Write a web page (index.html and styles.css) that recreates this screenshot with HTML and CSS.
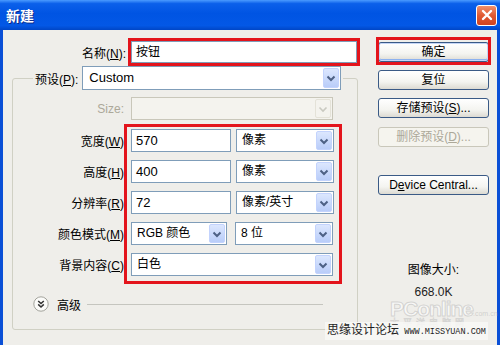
FILE: index.html
```html
<!DOCTYPE html>
<html lang="zh-CN">
<head>
    <meta charset="UTF-8" />
    <title>新建</title>
    <link rel="stylesheet" href="styles.css">
</head>
<body>
    <div class="window">
        <div class="titlebar">
            <span class="title">新建</span>
            <span class="close">
                <svg width="18" height="18" viewBox="0 0 18 18"><path d="M5 5 L13 13 M13 5 L5 13" stroke="#fff" stroke-width="2.4" stroke-linecap="round"/></svg>
            </span>
        </div>

        <div class="body">
            <div class="main">
                <div class="name-row">
                    <span class="label">名称(<u>N</u>):</span>
                    <div class="input name-input">按钮</div>
                </div>

                <fieldset class="group">
                    <legend class="preset">
                        <span class="preset-inner">
                            <span>预设(<u>P</u>):</span>
                            <span class="select preset-select">
                                <span class="val">Custom</span>
                                <span class="arrow"><svg width="14" height="18" viewBox="0 0 14 18"><path d="M3.5 7.5 L7 11 L10.5 7.5" fill="none" stroke="#4d6185" stroke-width="2"/></svg></span>
                            </span>
                        </span>
                    </legend>

                    <div class="row size-row">
                        <span class="label disabled">Size:</span>
                        <span class="select wide off">
                            <span class="val"></span>
                            <span class="arrow"><svg width="14" height="18" viewBox="0 0 14 18"><path d="M3.5 7.5 L7 11 L10.5 7.5" fill="none" stroke="#c9c9c0" stroke-width="1.6"/></svg></span>
                        </span>
                    </div>

                    <div class="fields">
                        <div class="row">
                            <span class="label">宽度(<u>W</u>)</span>
                            <div class="input num">570</div>
                            <span class="select unit">
                                <span class="val">像素</span>
                                <span class="arrow"><svg width="14" height="18" viewBox="0 0 14 18"><path d="M3.5 7.5 L7 11 L10.5 7.5" fill="none" stroke="#4d6185" stroke-width="2"/></svg></span>
                            </span>
                        </div>
                        <div class="row">
                            <span class="label">高度(<u>H</u>)</span>
                            <div class="input num">400</div>
                            <span class="select unit">
                                <span class="val">像素</span>
                                <span class="arrow"><svg width="14" height="18" viewBox="0 0 14 18"><path d="M3.5 7.5 L7 11 L10.5 7.5" fill="none" stroke="#4d6185" stroke-width="2"/></svg></span>
                            </span>
                        </div>
                        <div class="row">
                            <span class="label">分辨率(<u>R</u>)</span>
                            <div class="input num">72</div>
                            <span class="select unit">
                                <span class="val">像素/英寸</span>
                                <span class="arrow"><svg width="14" height="18" viewBox="0 0 14 18"><path d="M3.5 7.5 L7 11 L10.5 7.5" fill="none" stroke="#4d6185" stroke-width="2"/></svg></span>
                            </span>
                        </div>
                        <div class="row">
                            <span class="label">颜色模式(<u>M</u>)</span>
                            <span class="select mode">
                                <span class="val">RGB 颜色</span>
                                <span class="arrow"><svg width="14" height="18" viewBox="0 0 14 18"><path d="M3.5 7.5 L7 11 L10.5 7.5" fill="none" stroke="#4d6185" stroke-width="2"/></svg></span>
                            </span>
                            <span class="select unit bits">
                                <span class="val">8 位</span>
                                <span class="arrow"><svg width="14" height="18" viewBox="0 0 14 18"><path d="M3.5 7.5 L7 11 L10.5 7.5" fill="none" stroke="#4d6185" stroke-width="2"/></svg></span>
                            </span>
                        </div>
                        <div class="row">
                            <span class="label">背景内容(<u>C</u>)</span>
                            <span class="select wide">
                                <span class="val">白色</span>
                                <span class="arrow"><svg width="14" height="18" viewBox="0 0 14 18"><path d="M3.5 7.5 L7 11 L10.5 7.5" fill="none" stroke="#4d6185" stroke-width="2"/></svg></span>
                            </span>
                        </div>
                        <div class="mark"></div>
                    </div>

                    <div class="advanced">
                        <svg width="16" height="16" viewBox="0 0 16 16">
                            <circle cx="8" cy="8" r="7.2" fill="#fbfbf9" stroke="#a3a39c"/>
                            <path d="M5.2 5 L8 7.6 L10.8 5 M5.2 8.4 L8 11 L10.8 8.4" fill="none" stroke="#333" stroke-width="1.5"/>
                        </svg>
                        <span class="adv-text">高级</span>
                        <span class="line"></span>
                    </div>
                </fieldset>
            </div>

            <div class="side">
                <div class="btn default">确定</div>
                <div class="btn">复位</div>
                <div class="btn">存储预设(<u>S</u>)...</div>
                <div class="btn off">删除预设(<u>D</u>)...</div>
                <div class="btn gap">D<u>e</u>vice Central...</div>
                <div class="size-title">图像大小:</div>
                <div class="size-value">668.0K</div>
            </div>
        </div>

        <div class="pconline">
            <span class="pc-big">PConline</span><span class="pc-dom">.com.cn</span>
            <span class="pc-cn">太平洋电脑网</span>
        </div>
        <div class="watermark">思缘设计论坛 <span class="url">WWW.MISSYUAN.COM</span></div>
    </div>
</body>
</html>
```

FILE: styles.css
```css
* {
    box-sizing: border-box;
}

body {
    margin: 0;
    font-family: "Liberation Sans", "Noto Sans CJK SC", sans-serif;
    font-size: 12px;
    color: #000;
}

.window {
    position: relative;
    width: 500px;
    height: 345px;
    overflow: hidden;
}

.titlebar {
    height: 30px;
    display: flex;
    align-items: center;
    justify-content: space-between;
    padding: 0 3px 0 6px;
    background: linear-gradient(to bottom, #4a9bff 0%, #0b60ea 12%, #0054e3 45%, #0358e6 85%, #0046c6 100%);
}

.title {
    color: #fff;
    font-weight: bold;
    font-size: 14px;
    text-shadow: 1px 1px 0 #0a2a8a;
}

.close {
    width: 21px;
    height: 21px;
    display: flex;
    align-items: center;
    justify-content: center;
    border: 1px solid #fff;
    border-radius: 3px;
    background: linear-gradient(to bottom, #f0906c, #e05a33 50%, #cf4220);
}

.body {
    display: flex;
    height: 315px;
    padding-left: 9px;
    background: #efeeea;
    border-left: 3px solid #0a4fd6;
    border-right: 3px solid #0a4fd6;
}

.main {
    width: 346px;
}

.name-row {
    display: flex;
    align-items: center;
    margin-top: 11px;
    height: 22px;
}

.label {
    text-align: right;
    white-space: nowrap;
}

.name-row .label {
    width: 119px;
    padding-right: 5px;
}

.input {
    height: 22px;
    line-height: 20px;
    padding-left: 4px;
    background: #fff;
    border: 1px solid #7f9db9;
}

.name-input {
    width: 226px;
    outline: 3px solid #e3141c;
    outline-offset: 0;
}

.group {
    margin: 3px 0 0;
    padding: 0 0 17px;
    width: 346px;
    min-width: 0;
    border: 1px solid #d0d0c4;
    border-radius: 3px;
}

.preset {
    margin-left: 20px;
    padding: 0 2px;
}

.preset-inner {
    display: flex;
    align-items: center;
    gap: 4px;
}

.select {
    display: flex;
    height: 23px;
    background: #fff;
    border: 1px solid #7f9db9;
}

.select .val {
    flex: 1;
    padding-left: 5px;
    line-height: 21px;
    white-space: nowrap;
}

.arrow {
    width: 16px;
    margin: 1px;
    display: flex;
    align-items: center;
    justify-content: center;
    border: 1px solid #c3d3fd;
    border-radius: 2px;
    background: linear-gradient(to bottom, #dce7fe, #b9cdf9);
}

.preset-select {
    width: 259px;
    height: 24px;
}

.preset-select .val {
    padding-left: 6px;
    font-size: 13px;
}

.row {
    display: flex;
    align-items: center;
    height: 23px;
    margin-top: 8px;
}

.row .label {
    width: 118px;
    padding-right: 7px;
}

.size-row {
    margin-top: 7px;
}

.disabled {
    color: #aca899;
}

.select.off {
    background: #f4f3ee;
    border-color: #c9c7ba;
}

.select.off .arrow {
    background: #f4f3ee;
    border-color: #e4e2d8;
}

.wide {
    width: 202px;
}

.fields {
    position: relative;
    margin-top: 9px;
}

.fields .row:first-child {
    margin-top: 0;
}

.num {
    width: 100px;
    height: 23px;
    line-height: 21px;
    font-size: 13px;
}

.unit {
    width: 98px;
    margin-left: 5px;
}

.mode {
    width: 96px;
}

.bits {
    margin-left: 8px;
}

/* annotation frame drawn over the size fields */
.mark {
    position: absolute;
    left: 111px;
    top: -5px;
    width: 218px;
    bottom: -8px;
    border: 3px solid #e3141c;
}

.advanced {
    display: flex;
    align-items: center;
    height: 16px;
    margin-top: 20px;
    padding-left: 20px;
}

.adv-text {
    margin-left: 8px;
}

.line {
    margin-left: 6px;
    width: 236px;
    height: 1px;
    background: #c5c5bf;
}

.side {
    width: 111px;
    margin-left: 20px;
    padding-top: 12px;
}

.btn {
    height: 20px;
    line-height: 18px;
    margin-top: 8px;
    text-align: center;
    border: 1px solid #3a5a86;
    border-radius: 3px;
    background: linear-gradient(to bottom, #ffffff, #f4f4f0 60%, #dcdad2);
}

.btn:first-child {
    margin-top: 0;
}

.btn.default {
    position: relative;
    box-shadow: inset 0 0 0 1px #c4d5f6, inset 0 -1px 0 1px #8db2ef;
}

/* square red annotation around the OK button */
.btn.default::after {
    content: "";
    position: absolute;
    left: -3px;
    right: -3px;
    top: -6px;
    bottom: -4px;
    border: 3px solid #e3141c;
}

.btn.off {
    margin-top: 9px;
    color: #aca899;
    border-color: #c9c7ba;
    background: #f5f4ee;
}

.btn.gap {
    margin-top: 28px;
}

.size-title {
    margin-top: 68px;
    line-height: 14px;
    text-align: center;
}

.size-value {
    margin-top: 8px;
    line-height: 14px;
    text-align: center;
    color: #222;
}

/* site watermarks over the screenshot */
.pconline {
    position: absolute;
    left: 390px;
    top: 298px;
    width: 105px;
    line-height: 1;
}

.pc-big {
    font-size: 21px;
    font-weight: bold;
    letter-spacing: -1px;
    color: rgba(255, 255, 255, 0.55);
    -webkit-text-stroke: 1px rgba(150, 150, 150, 0.35);
}

.pc-dom {
    font-size: 7px;
    color: rgba(160, 160, 160, 0.4);
}

.pc-cn {
    display: block;
    margin-top: 0;
    font-size: 9px;
    letter-spacing: 4px;
    color: rgba(255, 255, 255, 0.6);
    -webkit-text-stroke: 0.6px rgba(150, 150, 150, 0.35);
}

.watermark {
    position: absolute;
    left: 325px;
    top: 322px;
    padding: 0 2px;
    line-height: 16px;
    font-size: 12px;
    color: #1e1e1e;
    background: rgba(248, 248, 246, 0.85);
}

.url {
    font-family: "Liberation Mono", monospace;
    font-size: 8.5px;
    margin-left: 2px;
}
```
